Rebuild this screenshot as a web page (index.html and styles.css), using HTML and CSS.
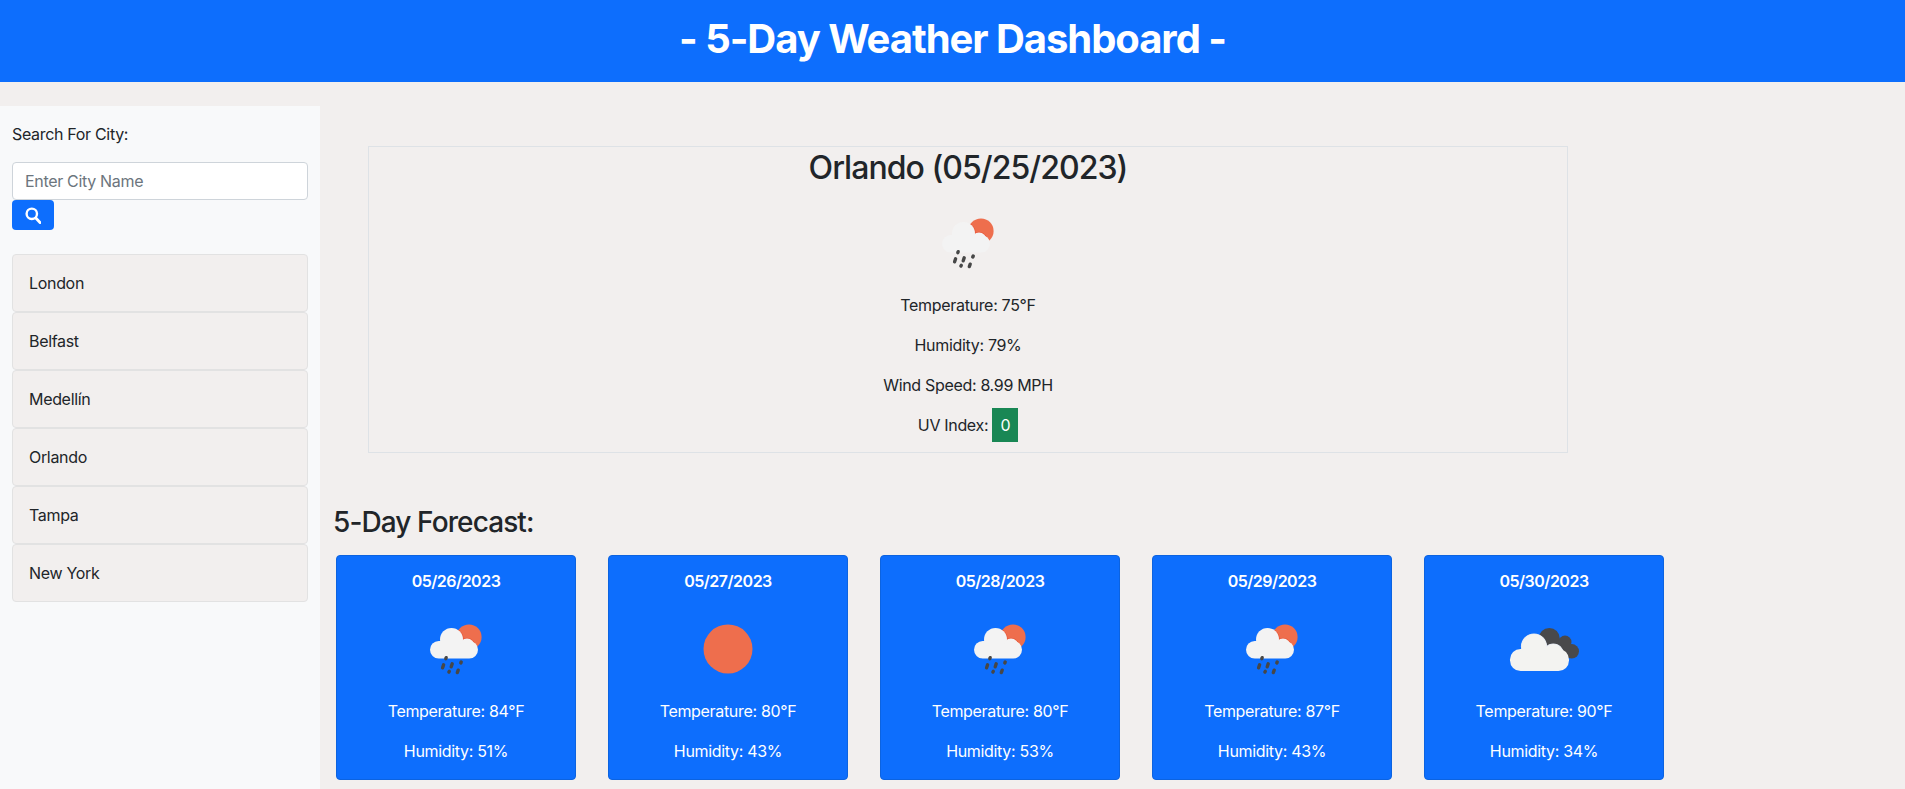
FILE: index.html
```html
<!DOCTYPE html>
<html lang="en">

<head>
    <meta charset="UTF-8">
    <meta name="viewport" content="width=device-width, initial-scale=1.0">
    <title>5-Day Weather Dashboard</title>
    <link rel="stylesheet" href="styles.css">
</head>

<body>
    <svg class="icon-defs" width="0" height="0" aria-hidden="true">
        <defs>
            <clipPath id="sunClip">
                <circle cx="63" cy="38" r="12.6" />
            </clipPath>
            <g id="rainCloud">
                <circle cx="63" cy="38" r="12.6" fill="#ee6e4d" />
                <g fill="#f3f3f3" stroke="#e8583a" stroke-width="1.4" clip-path="url(#sunClip)">
                    <circle cx="45.5" cy="40.5" r="11.5" />
                    <circle cx="61" cy="47" r="7.5" />
                </g>
                <g fill="#f3f3f3">
                    <rect x="24" y="42" width="48" height="17.5" rx="8.7" />
                    <circle cx="45.5" cy="40.5" r="11.5" />
                    <circle cx="61" cy="47" r="7.5" />
                </g>
                <g stroke="#474747" stroke-width="3.4" stroke-linecap="round">
                    <line x1="40.2" y1="58.7" x2="39.8" y2="59.7" />
                    <line x1="37.6" y1="65.8" x2="36.6" y2="68.8" />
                    <line x1="46.2" y1="64.8" x2="45.2" y2="67.8" />
                    <line x1="55.2" y1="63" x2="54.8" y2="64" />
                    <line x1="43.3" y1="72.4" x2="42.9" y2="73" />
                    <line x1="52.2" y1="71.2" x2="51.3" y2="73.6" />
                </g>
            </g>
            <g id="brokenCloud">
                <g fill="#49494b">
                    <circle cx="55.3" cy="39.5" r="10.5" />
                    <circle cx="71" cy="43" r="6.5" />
                    <circle cx="77.7" cy="52.3" r="7.3" />
                    <rect x="50" y="42" width="26" height="17" />
                </g>
                <g fill="#f3f3f1" stroke="#dfe6f2" stroke-width="1.2">
                    <circle cx="40" cy="47.5" r="12.5" />
                    <circle cx="59.3" cy="55" r="10" />
                </g>
                <g fill="#f3f3f1">
                    <rect x="16" y="50" width="59" height="22" rx="10.5" />
                    <circle cx="40" cy="47.5" r="12.5" />
                    <circle cx="59.3" cy="55" r="10" />
                </g>
            </g>
        </defs>
    </svg>

    <header class="page-header">
        <h1>- 5-Day Weather Dashboard -</h1>
    </header>

    <div class="layout">
        <aside class="sidebar">
            <label class="search-label" for="cityInput">Search For City:</label>
            <input class="search-input" type="text" id="cityInput" placeholder="Enter City Name">
            <button class="search-button" type="button" aria-label="Search">
                <svg width="16" height="17" viewBox="0 0 16 17">
                    <circle cx="6.8" cy="6.8" r="5.2" fill="none" stroke="#fff" stroke-width="2.4" />
                    <line x1="10.8" y1="11" x2="15" y2="15.6" stroke="#fff" stroke-width="2.8" stroke-linecap="round" />
                </svg>
            </button>

            <ul class="city-list">
                <li>London</li>
                <li>Belfast</li>
                <li>Medellín</li>
                <li>Orlando</li>
                <li>Tampa</li>
                <li>New York</li>
            </ul>
        </aside>

        <main class="content">
            <section class="today">
                <h2>Orlando (05/25/2023)</h2>
                <svg class="weather-icon" viewBox="0 0 100 100"><use href="#rainCloud" /></svg>
                <p>Temperature: 75°F</p>
                <p>Humidity: 79%</p>
                <p>Wind Speed: 8.99 MPH</p>
                <p class="uv-line">UV Index: <span class="uv-badge">0</span></p>
            </section>

            <h3>5-Day Forecast:</h3>
            <div class="forecast">
                <div class="card">
                    <h6>05/26/2023</h6>
                    <svg class="weather-icon" viewBox="0 0 100 100"><use href="#rainCloud" /></svg>
                    <p>Temperature: 84°F</p>
                    <p>Humidity: 51%</p>
                </div>
                <div class="card">
                    <h6>05/27/2023</h6>
                    <svg class="weather-icon" viewBox="0 0 100 100"><circle cx="50" cy="50" r="24.5" fill="#ee6e4d" /></svg>
                    <p>Temperature: 80°F</p>
                    <p>Humidity: 43%</p>
                </div>
                <div class="card">
                    <h6>05/28/2023</h6>
                    <svg class="weather-icon" viewBox="0 0 100 100"><use href="#rainCloud" /></svg>
                    <p>Temperature: 80°F</p>
                    <p>Humidity: 53%</p>
                </div>
                <div class="card">
                    <h6>05/29/2023</h6>
                    <svg class="weather-icon" viewBox="0 0 100 100"><use href="#rainCloud" /></svg>
                    <p>Temperature: 87°F</p>
                    <p>Humidity: 43%</p>
                </div>
                <div class="card">
                    <h6>05/30/2023</h6>
                    <svg class="weather-icon" viewBox="0 0 100 100"><use href="#brokenCloud" /></svg>
                    <p>Temperature: 90°F</p>
                    <p>Humidity: 34%</p>
                </div>
            </div>
        </main>
    </div>
</body>

</html>
```

FILE: styles.css
```css
* {
    box-sizing: border-box;
}

body {
    margin: 0;
    height: 100vh;
    overflow: hidden;
    display: flex;
    flex-direction: column;
    font-family: Inter, "Liberation Sans", sans-serif;
    font-size: 16px;
    line-height: 24px;
    letter-spacing: -0.32px;
    color: #212529;
    background-color: #f2efee;
}

.icon-defs {
    position: absolute;
}

.page-header {
    background-color: #0d6efd;
    color: white;
    text-align: center;
    height: 82px;
    padding-top: 15px;
}

.page-header h1 {
    margin: 0;
    font-size: 40px;
    line-height: 48px;
    font-weight: 700;
    letter-spacing: -1.05px;
}

.layout {
    flex: 1;
    display: flex;
    margin-top: 24px;
    min-height: 0;
}

.sidebar {
    width: 320px;
    padding: 16px 12px 0;
    background-color: #f8f9fa;
}

.search-label {
    display: block;
    margin-bottom: 16px;
}

.search-input {
    display: block;
    width: 100%;
    height: 38px;
    padding: 6px 12px;
    font-family: inherit;
    font-size: 16px;
    letter-spacing: inherit;
    color: #212529;
    background-color: white;
    border: 1px solid #ced4da;
    border-radius: 4px;
}

.search-input::placeholder {
    color: #6c757d;
}

.search-button {
    display: flex;
    align-items: center;
    justify-content: center;
    width: 42px;
    height: 30px;
    padding: 0;
    background-color: #0d6efd;
    border: none;
    border-radius: 4px;
}

.city-list {
    list-style: none;
    margin: 24px 0 0;
    padding: 0;
}

.city-list li {
    height: 58px;
    padding: 16px;
    background-color: #f2efee;
    border: 1px solid #e2e2e2;
    border-radius: 4px;
}

.content {
    flex: 1;
    padding: 40px 16px 0;
}

.today {
    width: 1200px;
    margin-left: 32px;
    text-align: center;
    border: 1px solid #dee2e6;
}

.today h2 {
    margin: 0 0 6px;
    padding-top: 2px;
    font-size: 32px;
    line-height: 38px;
    font-weight: 500;
    letter-spacing: -0.95px;
}

.today p,
.card p {
    margin: 0 0 16px;
}

.today .uv-line {
    margin-bottom: 15px;
}

.weather-icon {
    display: block;
    width: 100px;
    height: 100px;
    margin: 0 auto;
}

.uv-badge {
    padding: 7px 8px;
    color: white;
    background-color: #198754;
}

.content h3 {
    margin: 52px 0 16px -3px;
    font-size: 28px;
    line-height: 34px;
    font-weight: 500;
    letter-spacing: -0.9px;
}

.forecast {
    display: flex;
    gap: 32px;
}

.card {
    width: 240px;
    padding: 16px 16px 0;
    color: white;
    text-align: center;
    background-color: #0d6efd;
    border: 1px solid #0c63e0;
    border-radius: 4px;
}

.card h6 {
    margin: 0 0 8px;
    font-size: 16px;
    line-height: 19px;
    font-weight: 600;
    letter-spacing: -0.5px;
}
```
